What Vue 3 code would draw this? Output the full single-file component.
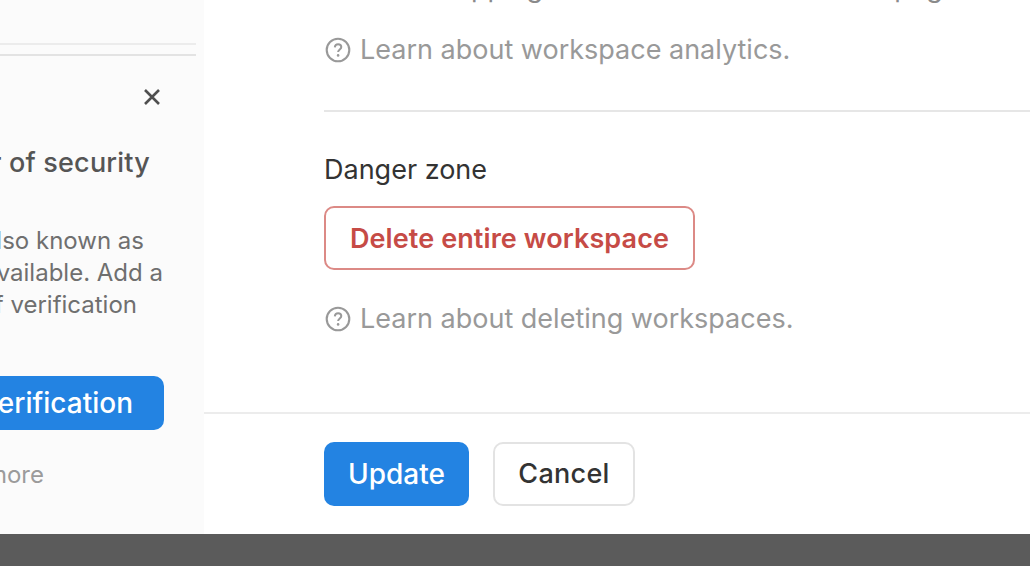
<script setup>
const helpLinks = {
  analytics: 'Learn about workspace analytics.',
  deleting: 'Learn about deleting workspaces.',
}
</script>

<template>
  <div class="page">
    <div class="window">
      <aside class="side">
        <div class="rules">
          <div class="rule"></div>
          <div class="rule"></div>
        </div>
        <div class="close-row">
          <svg class="close" viewBox="0 0 18 18" width="18" height="18" aria-hidden="true">
            <path d="M2 2 L16 16 M16 2 L2 16" fill="none" stroke="#4f4f4f" stroke-width="2.6" />
          </svg>
        </div>
        <div class="line head">Add an extra layer of security</div>
        <div class="copy">
          <div class="line l1">Two-step authentication, also known as</div>
          <div class="line l2">2FA, is now available. Add a</div>
          <div class="line l3">second layer of verification</div>
        </div>
        <div class="cta-row">
          <div class="cta">Add two-step verification</div>
        </div>
        <div class="line more">Learn more</div>
      </aside>
      <main class="main">
        <div class="content">
          <p class="cut-text">Turn off mapping of all member visits on the page</p>
          <div class="help first">
            <svg class="q" viewBox="0 0 26 26" width="26" height="26" aria-hidden="true">
              <circle cx="13" cy="13" r="11.3" fill="none" stroke="#999" stroke-width="2.1" />
              <path d="M9.8 10.4c.2-2 1.5-3.2 3.3-3.2 1.9 0 3.2 1.2 3.2 2.8 0 2.4-3.2 2.5-3.2 5" fill="none" stroke="#999" stroke-width="2" />
              <circle cx="13.1" cy="18.4" r="1.3" fill="#999" />
            </svg>
            <span>{{ helpLinks.analytics }}</span>
          </div>
          <div class="divider"></div>
          <div class="label">Danger zone</div>
          <button class="danger" type="button">Delete entire workspace</button>
          <div class="help second">
            <svg class="q" viewBox="0 0 26 26" width="26" height="26" aria-hidden="true">
              <circle cx="13" cy="13" r="11.3" fill="none" stroke="#999" stroke-width="2.1" />
              <path d="M9.8 10.4c.2-2 1.5-3.2 3.3-3.2 1.9 0 3.2 1.2 3.2 2.8 0 2.4-3.2 2.5-3.2 5" fill="none" stroke="#999" stroke-width="2" />
              <circle cx="13.1" cy="18.4" r="1.3" fill="#999" />
            </svg>
            <span>{{ helpLinks.deleting }}</span>
          </div>
        </div>
        <footer class="foot">
          <button class="btn primary" type="button">Update</button>
          <button class="btn ghost" type="button">Cancel</button>
        </footer>
      </main>
    </div>
    <div class="bottom"></div>
  </div>
</template>

<style scoped>
.page {
  width: 1030px;
  height: 566px;
  display: flex;
  flex-direction: column;
  overflow: hidden;
  font-family: Inter, "Liberation Sans", sans-serif;
  background: #5b5b5b;
}
.window {
  height: 534px;
  display: flex;
  background: #fff;
  flex: none;
}
.side {
  width: 204px;
  flex: none;
  background: #fbfbfb;
  overflow: hidden;
}
.rules {
  padding-top: 43px;
  padding-right: 8px;
}
.rule {
  height: 2px;
  background: #ececec;
}
.rule + .rule {
  margin-top: 9px;
  background: #e3e3e3;
}
.close-row {
  display: flex;
  justify-content: flex-end;
  padding: 32px 43px 0 0;
}
.close {
  display: block;
}
.line {
  display: flex;
  justify-content: flex-end;
  white-space: nowrap;
}
.head {
  margin-top: 40px;
  padding-right: 54px;
  font-size: 27px;
  line-height: 34px;
  font-weight: 500;
  letter-spacing: 0.2px;
  color: #555;
}
.copy {
  margin-top: 45px;
  font-size: 24px;
  line-height: 32px;
  color: #6f6f6f;
}
.l1 {
  padding-right: 60px;
}
.l2 {
  padding-right: 41px;
}
.l3 {
  padding-right: 67px;
}
.cta-row {
  margin-top: 55px;
  padding-right: 40px;
  display: flex;
  justify-content: flex-end;
}
.cta {
  height: 54px;
  padding: 0 31px 0 300px;
  border-radius: 10px;
  background: #2383e2;
  color: #fff;
  font-size: 28px;
  font-weight: 550;
  line-height: 54px;
  white-space: nowrap;
  flex: none;
}
.more {
  margin-top: 29px;
  padding-right: 160px;
  font-size: 24px;
  line-height: 32px;
  color: #9b9b9b;
}
.main {
  flex: 1;
  min-width: 0;
  display: flex;
  flex-direction: column;
}
.content {
  flex: 1;
  padding-left: 120px;
  overflow: hidden;
}
.cut-text {
  margin: -28px 0 0;
  height: 32px;
  font-size: 27px;
  line-height: 32px;
  color: #8a8a8a;
  white-space: nowrap;
}
.help {
  display: flex;
  align-items: center;
  gap: 9px;
  font-size: 27px;
  line-height: 34px;
  color: #999;
  padding-left: 1px;
}
.q {
  flex: none;
}
.first {
  margin-top: 29px;
}
.divider {
  height: 2px;
  margin-top: 43px;
  background: #e6e6e6;
}
.label {
  margin-top: 41px;
  font-size: 27px;
  line-height: 34px;
  color: #333;
}
.danger {
  display: block;
  width: 371px;
  height: 64px;
  margin-top: 19px;
  border: 2px solid #dc8a86;
  border-radius: 10px;
  background: #fff;
  color: #c64b46;
  font: 600 27px/34px Inter, "Liberation Sans", sans-serif;
  letter-spacing: 0.1px;
  padding: 2px 0 0;
}
.second {
  margin-top: 32px;
}
.foot {
  height: 122px;
  flex: none;
  border-top: 2px solid #ececec;
  padding: 28px 0 0 120px;
  display: flex;
  gap: 24px;
  align-items: flex-start;
  box-sizing: border-box;
}
.btn {
  height: 64px;
  border-radius: 10px;
  padding: 0;
}
.primary {
  width: 145px;
  border: 0;
  background: #2383e2;
  color: #fff;
  font: 550 28px/34px Inter, "Liberation Sans", sans-serif;
}
.ghost {
  width: 142px;
  border: 2px solid #e3e3e3;
  background: #fff;
  color: #333;
  font: 500 27px/34px Inter, "Liberation Sans", sans-serif;
  letter-spacing: 0.3px;
}
.bottom {
  flex: 1;
  background: #5b5b5b;
}
</style>
